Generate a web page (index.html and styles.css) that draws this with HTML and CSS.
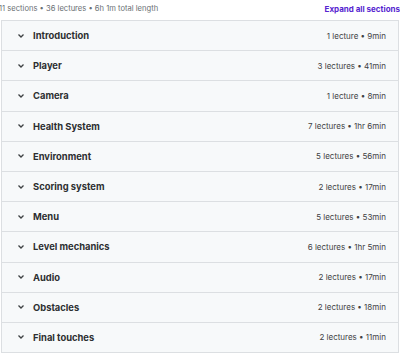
FILE: index.html
```html
<!DOCTYPE html>
<html lang="en">
<head>
    <meta charset="UTF-8">
    <title>Course content</title>
    <link rel="stylesheet" href="styles.css">
</head>
<body>
    <div class="summary">
        <span class="stats">11 sections • 36 lectures • 6h 1m total length</span>
        <button class="expand">Expand all sections</button>
    </div>

    <div class="sections">
        <div class="section"><span class="chev"><svg width="8" height="6" viewBox="0 0 8 6"><path d="M1.5 1.5 L4 4 L6.5 1.5" fill="none" stroke="#3e4143" stroke-width="1.3"/></svg></span><span class="title">Introduction</span><span class="meta">1 lecture • 9min</span></div>
        <div class="section"><span class="chev"><svg width="8" height="6" viewBox="0 0 8 6"><path d="M1.5 1.5 L4 4 L6.5 1.5" fill="none" stroke="#3e4143" stroke-width="1.3"/></svg></span><span class="title">Player</span><span class="meta">3 lectures • 41min</span></div>
        <div class="section"><span class="chev"><svg width="8" height="6" viewBox="0 0 8 6"><path d="M1.5 1.5 L4 4 L6.5 1.5" fill="none" stroke="#3e4143" stroke-width="1.3"/></svg></span><span class="title">Camera</span><span class="meta">1 lecture • 8min</span></div>
        <div class="section"><span class="chev"><svg width="8" height="6" viewBox="0 0 8 6"><path d="M1.5 1.5 L4 4 L6.5 1.5" fill="none" stroke="#3e4143" stroke-width="1.3"/></svg></span><span class="title">Health System</span><span class="meta">7 lectures • 1hr 6min</span></div>
        <div class="section"><span class="chev"><svg width="8" height="6" viewBox="0 0 8 6"><path d="M1.5 1.5 L4 4 L6.5 1.5" fill="none" stroke="#3e4143" stroke-width="1.3"/></svg></span><span class="title">Environment</span><span class="meta">5 lectures • 56min</span></div>
        <div class="section"><span class="chev"><svg width="8" height="6" viewBox="0 0 8 6"><path d="M1.5 1.5 L4 4 L6.5 1.5" fill="none" stroke="#3e4143" stroke-width="1.3"/></svg></span><span class="title">Scoring system</span><span class="meta">2 lectures • 17min</span></div>
        <div class="section"><span class="chev"><svg width="8" height="6" viewBox="0 0 8 6"><path d="M1.5 1.5 L4 4 L6.5 1.5" fill="none" stroke="#3e4143" stroke-width="1.3"/></svg></span><span class="title">Menu</span><span class="meta">5 lectures • 53min</span></div>
        <div class="section"><span class="chev"><svg width="8" height="6" viewBox="0 0 8 6"><path d="M1.5 1.5 L4 4 L6.5 1.5" fill="none" stroke="#3e4143" stroke-width="1.3"/></svg></span><span class="title">Level mechanics</span><span class="meta">6 lectures • 1hr 5min</span></div>
        <div class="section"><span class="chev"><svg width="8" height="6" viewBox="0 0 8 6"><path d="M1.5 1.5 L4 4 L6.5 1.5" fill="none" stroke="#3e4143" stroke-width="1.3"/></svg></span><span class="title">Audio</span><span class="meta">2 lectures • 17min</span></div>
        <div class="section"><span class="chev"><svg width="8" height="6" viewBox="0 0 8 6"><path d="M1.5 1.5 L4 4 L6.5 1.5" fill="none" stroke="#3e4143" stroke-width="1.3"/></svg></span><span class="title">Obstacles</span><span class="meta">2 lectures • 18min</span></div>
        <div class="section"><span class="chev"><svg width="8" height="6" viewBox="0 0 8 6"><path d="M1.5 1.5 L4 4 L6.5 1.5" fill="none" stroke="#3e4143" stroke-width="1.3"/></svg></span><span class="title">Final touches</span><span class="meta">2 lectures • 11min</span></div>
    </div>
</body>
</html>
```

FILE: styles.css
```css
body {
    margin: 0;
    padding: 0 1px 0 0;
    font-family: Inter, "Noto Sans", sans-serif;
    color: #2d2f31;
    background: #fff;
}

.summary {
    display: flex;
    justify-content: space-between;
    align-items: center;
    height: 17px;
    padding-bottom: 3px;
}

.stats {
    font-size: 7.6px;
    color: #6a6f73;
    margin-left: -1px;
}

.expand {
    border: none;
    background: none;
    padding: 0;
    margin-right: -1px;
    font-family: inherit;
    font-size: 8px;
    font-weight: 700;
    color: #5624d0;
    cursor: pointer;
}

.sections {
    margin-left: 1px;
    border: 1px solid #dcdfe2;
    border-bottom: none;
}

.section {
    display: flex;
    align-items: center;
    height: 29.2px;
    padding: 0 12px 0 15px;
    background: #f7f9fa;
    border-bottom: 1px solid #dcdfe2;
}

.chev {
    display: flex;
    width: 16px;
}

.title {
    flex: 1;
    font-size: 9.4px;
    font-weight: 700;
}

.meta {
    font-size: 8px;
    color: #3e4143;
}
```
